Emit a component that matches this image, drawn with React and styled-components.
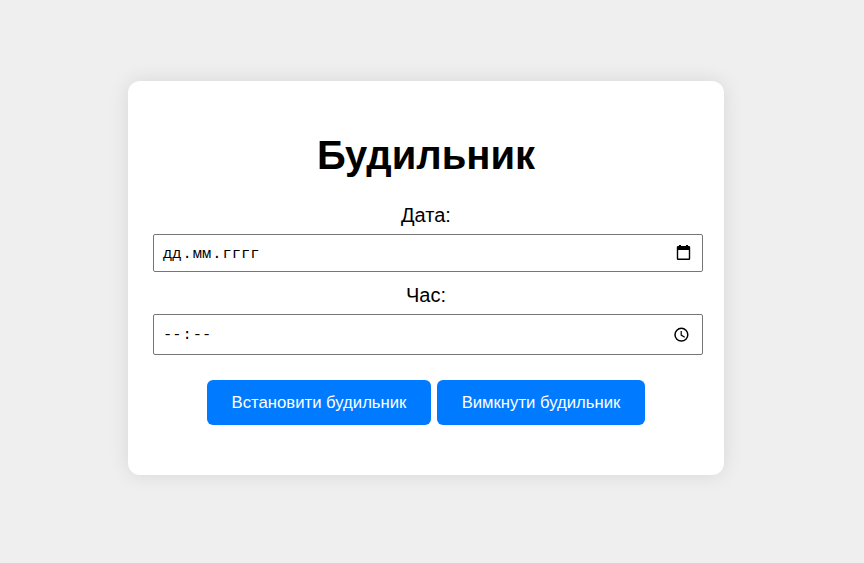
import React from "react";
import styled, { createGlobalStyle } from "styled-components";

const GlobalStyle = createGlobalStyle`
  * { box-sizing: border-box; }
  body { margin: 0; background: #efefef; color: #000; font-family: Arial, "Liberation Sans", sans-serif; }
`;

const Page = styled.main`
  height: 563px;
  padding: 81px 140px 0 128px;
  overflow: hidden;
`;

const Card = styled.section`
  height: 394px;
  padding: 50px 21px 0 25px;
  background: #fff;
  border-radius: 12px;
  box-shadow: 0 0 20px rgba(0, 0, 0, 0.1);
`;

const Title = styled.h1`
  margin: 0 4px 22px 0;
  font-size: 40px;
  line-height: 48px;
  text-align: center;
`;

const Label = styled.label`
  display: block;
  height: 33px;
  margin: 0 4px 0 0;
  padding-top: 2px;
  font-size: 20px;
  line-height: 24px;
  text-align: center;
`;

const Field = styled.div`
  display: flex;
  align-items: center;
  justify-content: space-between;
  height: ${(p) => p.$height}px;
  margin-bottom: ${(p) => p.$gap}px;
  padding: 0 ${(p) => p.$inset}px 0 8px;
  border: 1px solid #767676;
  border-radius: 2px;
  font-family: "Liberation Mono", monospace;
  font-size: 15.4px;
`;

const Value = styled.span`
  display: flex;
  padding-top: 1px;
`;

const Segment = styled.span`
  padding: 0 1px;
`;

const Actions = styled.div`
  display: flex;
  justify-content: center;
  gap: 6px;
  margin-right: 4px;
`;

const Button = styled.button`
  width: ${(p) => p.$width}px;
  height: 45px;
  padding: 0;
  border: 0;
  border-radius: 6px;
  background: #007bff;
  color: #fff;
  font: 16.7px/20px Arial, "Liberation Sans", sans-serif;
`;

const CalendarIcon = () => (
  <svg width="15" height="16" viewBox="0 0 15 16">
    <path fillRule="evenodd" d="M3 0h2v1h5V0h2v1h1q1.2 0 1.2 1.2v11.6q0 1.2-1.2 1.2H2Q.8 15 .8 13.8V2.2Q.8 1 2 1h1zM2.2 5v8.6h10.6V5z" />
  </svg>
);

const ClockIcon = () => (
  <svg width="16" height="16" viewBox="0 0 16 16" fill="none" stroke="#000" strokeWidth="1.5">
    <circle cx="8.4" cy="7.7" r="6.4" />
    <path d="M8.2 3.9v4.2l3.5 2.1" strokeWidth="1.2" />
  </svg>
);

export default function App() {
  return (
    <>
      <GlobalStyle />
      <Page>
        <Card>
          <Title>Будильник</Title>
          <Label>Дата:</Label>
          <Field $height={38} $gap={9} $inset={11}>
            <Value>
              <Segment>дд</Segment>.<Segment>мм</Segment>.<Segment>гггг</Segment>
            </Value>
            <CalendarIcon />
          </Field>
          <Label>Час:</Label>
          <Field $height={41} $gap={25} $inset={13}>
            <Value>
              <Segment>--</Segment>:<Segment>--</Segment>
            </Value>
            <ClockIcon />
          </Field>
          <Actions>
            <Button $width={224}>Встановити будильник</Button>
            <Button $width={208}>Вимкнути будильник</Button>
          </Actions>
        </Card>
      </Page>
    </>
  );
}
